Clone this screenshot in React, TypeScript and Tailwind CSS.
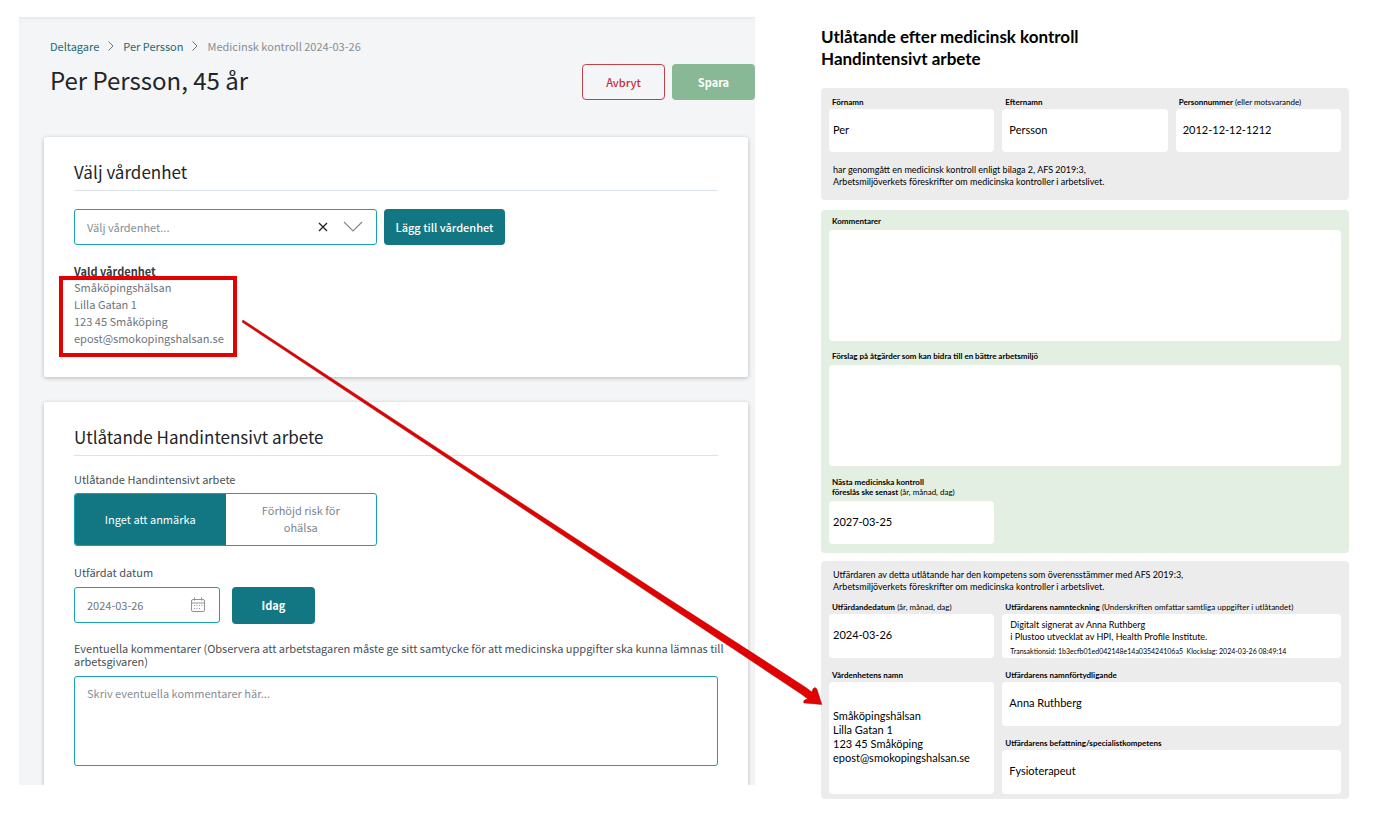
import { useState } from 'react'
import type { ReactNode } from 'react'
import clsx from 'clsx'

const outcomes = [
  { id: 'ok', label: 'Inget att anmärka' },
  { id: 'risk', label: 'Förhöjd risk för ohälsa' },
]

const address = ['Småköpingshälsan', 'Lilla Gatan 1', '123 45 Småköping', 'epost@smokopingshalsan.se']

function CrumbArrow() {
  return (
    <svg viewBox="0 0 8 12" className="h-3 w-2" fill="none" stroke="#6b7680" aria-hidden="true">
      <path d="M1.5 1.5 6 6l-4.5 4.5" />
    </svg>
  )
}

function CalendarIcon() {
  return (
    <svg viewBox="0 0 16 16" className="size-4" fill="none" stroke="#8f9499" aria-hidden="true">
      <rect x="1.5" y="2.5" width="13" height="12" rx="1.5" />
      <path d="M1.5 6h13M4.500.5v3M11.500.5v3" />
      <path d="M4 8.500h1M6.500 8.500h1M9 8.500h1M11.500 8.500h1M4 11.500h1M6.500 11.500h1M9 11.500h1" />
    </svg>
  )
}

function Card({ title, children }: { title: string; children: ReactNode }) {
  return (
    <section className="rounded-xs bg-white px-[30px] pt-[23px] shadow-[0_1px_4px_rgba(0,0,0,0.25)] last:rounded-b-none">
      <h2 className="border-b border-[#dde3ea] pb-1.5 text-[17px] leading-6 text-[#212529]">{title}</h2>
      {children}
    </section>
  )
}

interface FieldProps {
  label: ReactNode
  hint?: string
  roomy?: boolean
  className?: string
  children?: ReactNode
}

function Field({ label, hint, roomy, className, children }: FieldProps) {
  return (
    <div className="flex flex-col">
      <p className={clsx('px-[3px] text-[8px] leading-[10px]', roomy ? 'pb-1' : 'pb-0.5')}>
        <b className="font-bold">{label}</b>
        {hint && <span> {hint}</span>}
      </p>
      <div className={clsx('flex grow flex-col justify-center rounded-sm bg-white text-[11px] leading-[14px]', className)}>
        {children}
      </div>
    </div>
  )
}

function ParticipantForm() {
  const [outcome, setOutcome] = useState('ok')
  const [date, setDate] = useState('2024-03-26')
  const [unit, setUnit] = useState('')

  return (
    <main className="overflow-hidden bg-[#f4f5f7] font-['Noto_Sans_CJK_SC',sans-serif] text-[11px] text-[#495057] shadow-[inset_0_3px_4px_-2px_rgba(0,0,0,0.08)]">
      <nav aria-label="Brödsmulor" className="flex items-center gap-2 pt-[21px] pl-[31px] leading-4">
        <a href="#deltagare" className="text-[#1f6a6c]">Deltagare</a>
        <CrumbArrow />
        <a href="#per-persson" className="text-[#1f6a6c]">Per Persson</a>
        <CrumbArrow />
        <span className="text-[#868e96]">Medicinsk kontroll 2024-03-26</span>
      </nav>

      <header className="flex items-start pt-2.5 pl-[31px]">
        <h1 className="grow text-2xl leading-8 text-[#212529]">Per Persson, 45 år</h1>
        <div className="flex gap-[7px]">
          <button type="button" className="h-9 w-[83px] rounded-sm border border-[#c6404c] font-medium text-[#c6303e]">
            Avbryt
          </button>
          <button type="button" className="h-9 w-[83px] rounded-sm bg-[#88b896] font-bold text-white">
            Spara
          </button>
        </div>
      </header>

      <div className="flex flex-col gap-[25px] pt-[37px] pr-[7px] pl-[25px]">
        <Card title="Välj vårdenhet">
          <div className="flex gap-[7px] pt-[18px]">
            <div className="relative w-[303px]">
              <select
                aria-label="Välj vårdenhet"
                value={unit}
                onChange={(e) => setUnit(e.target.value)}
                className="h-9 w-full appearance-none rounded-[3px] border border-[#17a2b0] bg-white px-3 text-[#868e96]"
              >
                <option value="">Välj vårdenhet...</option>
                <option value="smakoping">Småköpingshälsan</option>
              </select>
              <button
                type="button"
                aria-label="Rensa"
                onClick={() => setUnit('')}
                className="absolute top-3 right-12 flex size-3 items-center justify-center"
              >
                <svg viewBox="0 0 10 10" className="size-2.5" stroke="#222" strokeWidth="1.3" aria-hidden="true">
                  <path d="m1 1 8 8M9 1 1 9" />
                </svg>
              </button>
              <svg viewBox="0 0 20 12" className="pointer-events-none absolute top-3 right-3.5 h-3 w-5" fill="none" stroke="#7f8890" strokeWidth="1.2" aria-hidden="true">
                <path d="m1 1 9 9 9-9" />
              </svg>
            </div>
            <button type="button" className="h-9 w-[121px] rounded-sm bg-[#127782] font-medium text-white">
              Lägg till vårdenhet
            </button>
          </div>

          <h3 className="pt-[18px] leading-4 font-bold text-[#343a40]">Vald vårdenhet</h3>
          <address className="relative mb-[30px] w-[148px] leading-[17px] whitespace-nowrap text-[#6c757d] not-italic">
            {address.map((line) => (
              <p key={line}>{line}</p>
            ))}
            <span className="absolute -inset-x-[15px] -top-[3px] -bottom-2.5 border-4 border-[#e20000]" />
          </address>
        </Card>

        <Card title="Utlåtande Handintensivt arbete">
          <fieldset className="pt-[15px]">
            <legend className="contents leading-4">Utlåtande Handintensivt arbete</legend>
            <div className="mt-[5px] flex w-[303px] overflow-hidden rounded-[3px] border border-[#17a2b0]">
              {outcomes.map((item) => (
                <label
                  key={item.id}
                  className={clsx(
                    'flex h-[51px] w-1/2 items-center justify-center px-7 text-center leading-[17px]',
                    outcome === item.id ? 'bg-[#127782] text-white' : 'text-[#7c858c]',
                  )}
                >
                  <input
                    type="radio"
                    name="outcome"
                    className="sr-only"
                    checked={outcome === item.id}
                    onChange={() => setOutcome(item.id)}
                  />
                  {item.label}
                </label>
              ))}
            </div>
          </fieldset>

          <label htmlFor="issued" className="block pt-[18px] leading-4">Utfärdat datum</label>
          <div className="flex gap-3 pt-[7px]">
            <div className="relative w-[146px]">
              <input
                id="issued"
                type="text"
                value={date}
                onChange={(e) => setDate(e.target.value)}
                className="h-9 w-full rounded-[3px] border border-[#17a2b0] bg-white px-3 text-[#6c757d]"
              />
              <span className="pointer-events-none absolute top-2.5 right-3.5">
                <CalendarIcon />
              </span>
            </div>
            <button type="button" onClick={() => setDate('2024-03-26')} className="h-[37px] w-[83px] rounded-sm bg-[#127782] font-bold text-white">
              Idag
            </button>
          </div>

          <label htmlFor="comments" className="-mr-4 block pt-[18px] leading-[13px]">
            Eventuella kommentarer (Observera att arbetstagaren måste ge sitt samtycke för att medicinska uppgifter ska kunna lämnas till arbetsgivaren)
          </label>
          <textarea
            id="comments"
            placeholder="Skriv eventuella kommentarer här..."
            className="mt-2 mb-[19px] block h-[90px] w-full resize-none rounded-[3px] border border-[#17a2b0] px-3 py-2 leading-[17px] placeholder:text-[#868e96]"
          />
        </Card>
      </div>
    </main>
  )
}

function Certificate() {
  return (
    <article className="pt-[9px] font-[Lato,sans-serif] text-black">
      <h2 className="text-[17px] leading-[22px] font-bold">
        Utlåtande efter medicinsk kontroll
        <br />
        Handintensivt arbete
      </h2>

      <div className="mt-[18px] rounded-sm bg-[#ececec] px-2 pt-[9px] pb-3">
        <div className="grid grid-cols-3 gap-2">
          <Field label="Förnamn" className="min-h-[43px] px-1 pb-0.5">Per</Field>
          <Field label="Efternamn" className="min-h-[43px] px-[7px] pb-0.5">Persson</Field>
          <Field label="Personnummer" hint="(eller motsvarande)" className="min-h-[43px] px-[7px] pb-0.5">2012-12-12-1212</Field>
        </div>
        <p className="px-1 pt-3 text-[9px] leading-3">
          har genomgått en medicinsk kontroll enligt bilaga 2, AFS 2019:3,
          <br />
          Arbetsmiljöverkets föreskrifter om medicinska kontroller i arbetslivet.
        </p>
      </div>

      <div className="mt-2.5 flex flex-col gap-2.5 rounded-sm bg-[#e3efe3] px-2 pt-1.5 pb-[9px]">
        <Field roomy label="Kommentarer" className="min-h-[111px]" />
        <Field roomy label="Förslag på åtgärder som kan bidra till en bättre arbetsmiljö" className="min-h-[101px]" />
        <div className="grid grid-cols-3 gap-2 pt-px">
          <Field
            roomy
            label={<>Nästa medicinska kontroll<br />föreslås ske senast</>}
            hint="(år, månad, dag)"
            className="min-h-[43px] px-1 pb-0.5"
          >
            2027-03-25
          </Field>
        </div>
      </div>

      <div className="mt-2 rounded-sm bg-[#ececec] px-2 pt-2 pb-[5px]">
        <p className="px-1 pb-[9px] text-[9px] leading-3">
          Utfärdaren av detta utlåtande har den kompetens som överensstämmer med AFS 2019:3,
          <br />
          Arbetsmiljöverkets föreskrifter om medicinska kontroller i arbetslivet.
        </p>
        <div className="grid grid-cols-3 gap-x-2 gap-y-3">
          <Field label="Utfärdandedatum" hint="(år, månad, dag)" className="min-h-11 px-1 pb-0.5">2024-03-26</Field>
          <div className="col-span-2">
            <Field
              label="Utfärdarens namnteckning"
              hint="(Underskriften omfattar samtliga uppgifter i utlåtandet)"
              className="min-h-11 px-2 pt-1"
            >
              <p className="text-[9px] leading-3">
                Digitalt signerat av Anna Ruthberg
                <br />
                i Plustoo utvecklat av HPI, Health Profile Institute.
              </p>
              <p className="pt-0.5 text-[7px] leading-3">
                Transaktionsid: 1b3ecfb01ed042148e14a035424106a5&nbsp; Klockslag: 2024-03-26 08:49:14
              </p>
            </Field>
          </div>
          <div className="row-span-2 grid">
            <Field label="Vårdenhetens namn" className="px-1 pb-[3px]">
              {address.map((line) => (
                <p key={line}>{line}</p>
              ))}
            </Field>
          </div>
          <div className="col-span-2">
            <Field label="Utfärdarens namnförtydligande" className="min-h-11 px-[7px] pb-[3px]">Anna Ruthberg</Field>
          </div>
          <div className="col-span-2">
            <Field label="Utfärdarens befattning/specialistkompetens" className="min-h-11 px-[7px] pb-[3px]">Fysioterapeut</Field>
          </div>
        </div>
      </div>
    </article>
  )
}

export default function App() {
  return (
    <div className="relative grid grid-cols-[736fr_528fr] items-start gap-[66px] bg-white pt-[17px] pr-[34px] pb-6 pl-[19px]">
      <ParticipantForm />
      <Certificate />

      {/* Arrow from the chosen care unit to the same field in the certificate */}
      <svg
        viewBox="0 0 581 388"
        preserveAspectRatio="none"
        className="pointer-events-none absolute top-[319px] left-[17.5%] h-[388px] w-[42%]"
        aria-hidden="true"
      >
        <path
          d="M1 1 0 3 238 161 423 284.500 500 335.500 560 375.500 566 380 564 380.500Q561 381 562 384L580 385.500 575 370Q573 367 571 370L570 373 564 368.500 500 327 423 277.500 238 157Z"
          fill="#e20000"
          stroke="#9b1414"
          strokeWidth="0.5"
        />
      </svg>
    </div>
  )
}
